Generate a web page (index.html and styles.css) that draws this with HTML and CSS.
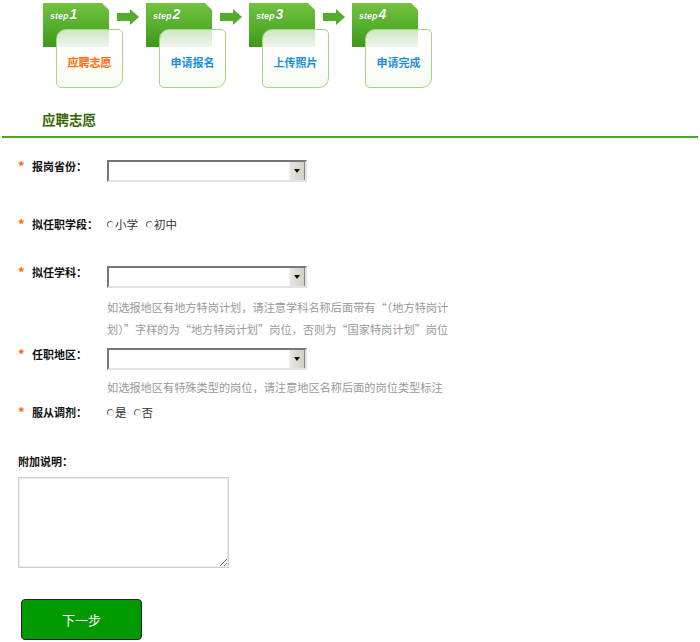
FILE: index.html
```html
<html>
  <head>
    <meta charset="utf-8" />
    <link rel="stylesheet" href="styles.css">
  </head>
  <body>
    <div class="steps">
      <div class="step">
        <div class="step-tab">step<b>1</b></div>
        <div class="step-card now">应聘志愿</div>
      </div>
      <svg class="arrow" viewBox="0 0 22 16"><path d="M0 4H13V0L22 8L13 16V12H0Z" /></svg>
      <div class="step">
        <div class="step-tab">step<b>2</b></div>
        <div class="step-card">申请报名</div>
      </div>
      <svg class="arrow" viewBox="0 0 22 16"><path d="M0 4H13V0L22 8L13 16V12H0Z" /></svg>
      <div class="step">
        <div class="step-tab">step<b>3</b></div>
        <div class="step-card">上传照片</div>
      </div>
      <svg class="arrow" viewBox="0 0 22 16"><path d="M0 4H13V0L22 8L13 16V12H0Z" /></svg>
      <div class="step">
        <div class="step-tab">step<b>4</b></div>
        <div class="step-card">申请完成</div>
      </div>
    </div>

    <h2 class="title">应聘志愿</h2>

    <div class="form">
      <div class="row first">
        <span class="star">*</span>
        <span class="label">报岗省份：</span>
        <div class="combo"><select></select><span class="combo-btn"></span></div>
      </div>

      <div class="row gap34">
        <span class="star">*</span>
        <span class="label">拟任职学段：</span>
        <label class="opt"><input type="radio" name="level" />小学</label>
        <label class="opt"><input type="radio" name="level" />初中</label>
      </div>

      <div class="row gap32">
        <span class="star">*</span>
        <span class="label">拟任学科：</span>
        <div class="combo"><select></select><span class="combo-btn"></span></div>
      </div>
      <div class="hint first-hint">如选报地区有地方特岗计划，请注意学科名称后面带有“（地方特岗计<br>划）”字样的为“地方特岗计划”岗位，否则为“国家特岗计划”岗位</div>

      <div class="row gap6">
        <span class="star">*</span>
        <span class="label">任职地区：</span>
        <div class="combo"><select></select><span class="combo-btn"></span></div>
      </div>
      <div class="hint">如选报地区有特殊类型的岗位，请注意地区名称后面的岗位类型标注</div>

      <div class="row gap6">
        <span class="star">*</span>
        <span class="label">服从调剂：</span>
        <label class="opt tight"><input type="radio" name="adjust" />是</label>
        <label class="opt"><input type="radio" name="adjust" />否</label>
      </div>

      <div class="note-label">附加说明：</div>
      <textarea class="note"></textarea>

      <button class="next">下一步</button>
    </div>
  </body>
</html>
```

FILE: styles.css
```css
body {
  margin: 0;
  background: #fff;
  font-family: "Noto Sans CJK SC", "Liberation Sans", sans-serif;
  font-size: 12px;
  color: #222;
}

/* step header */
.steps {
  display: flex;
  padding: 3px 0 0 43px;
  height: 85px;
}
.step {
  position: relative;
  width: 66px;
  height: 85px;
}
.step-tab {
  height: 44px;
  box-sizing: border-box;
  padding: 3px 0 0 7px;
  background: linear-gradient(#72c23f, #55ad2c 55%, #3f961b);
  clip-path: polygon(0 0, calc(100% - 7px) 0, 100% 7px, 100% 100%, 0 100%);
  color: #fff;
  font-family: "Liberation Sans", sans-serif;
  font-style: italic;
  font-weight: bold;
  font-size: 9px;
  line-height: 16px;
  text-shadow: 0 0 1px rgba(0, 60, 0, 0.4);
}
.step-tab b {
  font-size: 14px;
  margin-left: 1px;
}
.step-card {
  position: absolute;
  left: 13px;
  top: 26px;
  width: 67px;
  height: 59px;
  box-sizing: border-box;
  padding-top: 25px;
  border: 1px solid #a4d684;
  border-radius: 10px 5px 10px 5px;
  background: linear-gradient(rgba(255, 255, 255, 0.72), rgba(255, 255, 255, 0.96) 35%, #f6fbf2);
  text-align: center;
  font-weight: bold;
  font-size: 11px;
  line-height: 14px;
  color: #1b8fdf;
}
.step-card.now {
  color: #ff6a00;
}
.arrow {
  width: 22px;
  height: 16px;
  margin: 6px 7px 0 8px;
  fill: #52ad2a;
}

/* section title */
.title {
  margin: 21px 2px 0;
  padding: 0 0 7px 40px;
  border-bottom: 2px solid #47aa1f;
  font-size: 13.5px;
  line-height: 20px;
  color: #336600;
}

/* form */
.form {
  padding: 20px 0 0 18px;
}
.row {
  display: flex;
  align-items: flex-start;
  line-height: 16px;
}
.gap34 {
  margin-top: 34px;
}
.gap32 {
  margin-top: 32px;
}
.gap6 {
  margin-top: 6px;
}
.star {
  width: 14px;
  color: #ff6600;
  font-weight: bold;
  font-size: 13px;
  line-height: 16px;
}
.label {
  width: 75px;
  font-weight: bold;
  font-size: 11px;
  color: #111;
}
.combo {
  display: flex;
  margin-top: 2px;
  width: 200px;
  height: 22px;
  box-sizing: border-box;
  border: 2px solid;
  border-color: #777 #e2e2e2 #e2e2e2 #777;
  background: #fff;
}
.combo select {
  flex-grow: 1;
  border: 0;
  outline: 0;
  background: transparent;
  -webkit-appearance: none;
  appearance: none;
}
.combo-btn {
  position: relative;
  width: 14px;
  background: linear-gradient(90deg, #e8e6df, #d2cfc6);
  border-left: 1px solid #f4f4f4;
  border-right: 1px solid #8a8a8a;
}
.combo-btn::after {
  content: "";
  position: absolute;
  left: 4px;
  top: 7px;
  border-left: 3px solid transparent;
  border-right: 3px solid transparent;
  border-top: 4px solid #111;
}
.opt {
  display: inline-flex;
  align-items: center;
  margin-right: 8px;
  font-size: 11.5px;
  color: #333;
}
.opt.tight {
  margin-right: 7px;
}
.opt input {
  -webkit-appearance: none;
  appearance: none;
  width: 7px;
  height: 7px;
  margin: 1px 1px 0 0;
  border: 1px solid;
  border-color: #666 #e0e0e0 #e0e0e0 #666;
  border-radius: 50%;
  background: #fff;
}
.hint {
  margin: 6px 0 0 89px;
  font-size: 11.2px;
  line-height: 22px;
  color: #999;
  white-space: nowrap;
}
.first-hint {
  margin-top: 8px;
}
.note-label {
  margin-top: 33px;
  line-height: 16px;
  font-weight: bold;
  font-size: 11px;
  color: #111;
}
.note {
  display: block;
  margin-top: 8px;
  width: 211px;
  height: 91px;
  box-sizing: border-box;
  border: 1px solid #cfcfcf;
  box-shadow: inset 0 0 0 1px #ececec;
}
.next {
  display: block;
  margin: 31px 0 0 3px;
  width: 121px;
  height: 41px;
  border: 1px solid #262626;
  border-radius: 4px;
  background: #009900;
  color: #fff;
  font-family: "Noto Sans CJK SC", sans-serif;
  font-size: 13px;
  cursor: pointer;
}
```
